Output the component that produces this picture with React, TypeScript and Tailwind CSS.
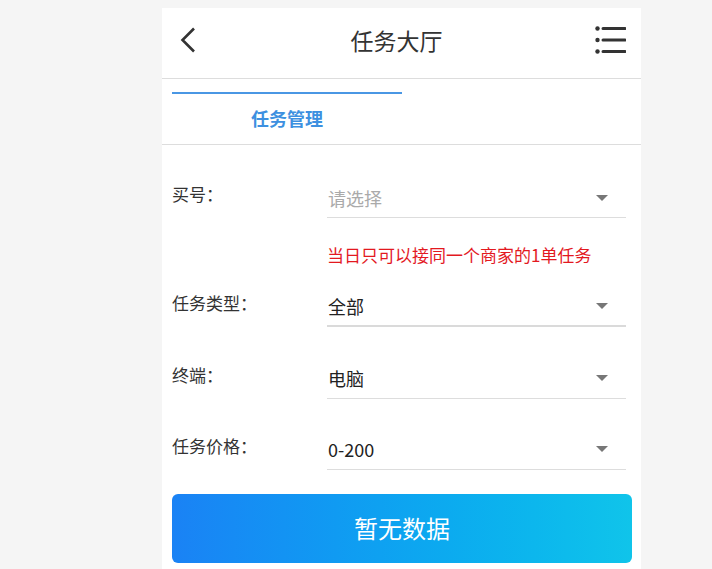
const rows = [
  { label: "买号：", value: "请选择", placeholder: true },
  { label: "任务类型：", value: "全部", placeholder: false },
  { label: "终端：", value: "电脑", placeholder: false },
  { label: "任务价格：", value: "0-200", placeholder: false },
];

function Caret() {
  return (
    <svg width="12" height="7" viewBox="0 0 12 7" className="mr-[18px]">
      <path d="M0 0h12L6 6z" fill="#777" />
    </svg>
  );
}

function Row({ label, value, placeholder, active = false }: { label: string; value: string; placeholder: boolean; active?: boolean }) {
  return (
    <div className="flex">
      <div className="w-[155px] pt-[4px] text-[17px] text-[#333]">{label}</div>
      <div
        className={`flex h-[41px] w-[299px] items-center justify-between pt-[2px] ${
          active ? "border-b-2 border-[#dadada]" : "border-b border-[#ddd]"
        }`}
      >
        <span className={`pl-[1px] text-[18px] ${placeholder ? "text-[#aaa]" : "text-[#222]"}`}>{value}</span>
        <Caret />
      </div>
    </div>
  );
}

export default function App() {
  return (
    <div
      className="min-h-[569px] bg-[#f5f5f5] pt-[8px]"
      style={{ fontFamily: '"Noto Sans CJK SC", "Noto Sans", sans-serif' }}
    >
      <div className="ml-[162px] h-[561px] w-[479px] overflow-hidden bg-white">
        <header className="flex h-[71px] items-center border-b border-[#ddd] px-[10px] pb-[6px]">
          <div className="flex w-[40px] items-center pl-[8px]">
            <svg width="16" height="26" viewBox="0 0 16 26">
              <path d="M14 1.5L2.5 13 14 24.5" fill="none" stroke="#333" strokeWidth="2.6" />
            </svg>
          </div>
          <h1 className="flex-1 text-center text-[23px] text-[#333]">任务大厅</h1>
          <div className="flex w-[50px] justify-end pr-[5px]">
            <svg width="31" height="28" viewBox="0 0 31 28">
              <circle cx="2.5" cy="2.5" r="2.2" fill="#333" />
              <circle cx="2.5" cy="14" r="2.2" fill="#333" />
              <circle cx="2.5" cy="25.5" r="2.2" fill="#333" />
              <path d="M8 2.5h22M8 14h22M8 25.5h22" stroke="#333" strokeWidth="3" strokeLinecap="round" />
            </svg>
          </div>
        </header>

        <div className="h-[66px] border-b border-[#ddd] px-[10px] pt-[13px]">
          <div className="flex h-[40px] w-[230px] items-center justify-center border-t-2 border-[#4a97e4] pt-[10px] text-[18px] font-bold text-[#3d90e0]">
            任务管理
          </div>
        </div>

        <div className="px-[10px] pt-[32px]">
          <Row {...rows[0]} />
          <div className="pl-[155px] pt-[24px] text-[17px] text-[#e3191f]">当日只可以接同一个商家的1单任务</div>
          <div className="mt-[18px]">
            <Row {...rows[1]} active />
          </div>
          <div className="mt-[31px]">
            <Row {...rows[2]} />
          </div>
          <div className="mt-[30px]">
            <Row {...rows[3]} />
          </div>
          <button className="mt-[24px] flex h-[69px] w-[460px] items-center justify-center rounded-[6px] bg-gradient-to-r from-[#1a82f5] to-[#10c4ea] text-[24px] text-white">
            暂无数据
          </button>
        </div>
      </div>
    </div>
  );
}
